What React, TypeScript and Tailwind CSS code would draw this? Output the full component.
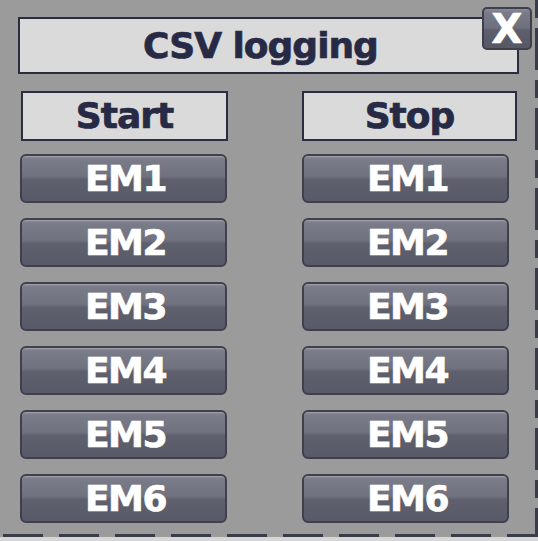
import React from "react";

const font = { fontFamily: '"DejaVu Sans", Verdana, sans-serif' };

function Label({ text, w }: { text: string; w: string }) {
  return (
    <div
      className={`${w} h-[50px] border-2 border-[#2a2d40] bg-[#dadada] flex items-center justify-center text-[36px] font-bold leading-none tracking-[-1px] text-[#272a45] [-webkit-text-stroke:0.7px_#272a45]`}
    >
      {text}
    </div>
  );
}

function EmButton({ text }: { text: string }) {
  return (
    <div className="w-[207px] h-[49px] rounded-[6px] border-2 border-[#3e404e] bg-[linear-gradient(180deg,#8a8b97_0%,#7a7b89_8%,#71727f_45%,#5f606e_52%,#595a68_100%)] shadow-[inset_0_1px_0_rgba(255,255,255,0.18)] flex items-center justify-center text-[36px] font-bold leading-none tracking-[-1.5px] text-white [-webkit-text-stroke:0.7px_#ffffff] pl-[4px]">
      {text}
    </div>
  );
}

export default function App() {
  const rows = ["EM1", "EM2", "EM3", "EM4", "EM5", "EM6"];
  return (
    <div className="w-[538px] h-[541px] bg-[#9b9b9b] overflow-hidden flex flex-col" style={font}>
      <div className="flex h-[534px]">
        <div className="relative w-[535px] h-[534px] flex flex-col">
          <div className="ml-[18px] mt-[17px] w-[501px] h-[57px] border-2 border-[#2a2d40] bg-[#dadada] flex items-center justify-center pr-[16px] text-[36px] font-bold leading-none tracking-[-1px] text-[#272a45] [-webkit-text-stroke:0.7px_#272a45]">
            CSV logging
          </div>
          <div className="absolute left-[482px] top-[7px] w-[50px] h-[43px] rounded-[5px] border-2 border-[#3e404e] bg-[linear-gradient(180deg,#8a8b97_0%,#797a88_10%,#6f707e_48%,#5e5f6d_54%,#575866_100%)] flex items-center justify-center text-[40px] font-bold leading-none text-white [-webkit-text-stroke:0.7px_#ffffff]">
            X
          </div>
          <div className="flex mt-[17px]">
            <div className="ml-[20px] w-[208px] flex flex-col">
              <div className="pl-[1px]">
                <Label text="Start" w="w-[207px]" />
              </div>
              <div className="mt-[13px] flex flex-col gap-[15px]">
                {rows.map((r) => (
                  <EmButton key={r} text={r} />
                ))}
              </div>
            </div>
            <div className="ml-[74px] w-[215px] flex flex-col">
              <Label text="Stop" w="w-[215px]" />
              <div className="mt-[13px] flex flex-col gap-[15px]">
                {rows.map((r) => (
                  <EmButton key={r} text={r} />
                ))}
              </div>
            </div>
          </div>
        </div>
        <div className="w-[3px] h-[534px] bg-[repeating-linear-gradient(180deg,#3a3c48_0_18px,transparent_18px_28px,#3a3c48_28px_70px,transparent_70px_80px)]" />
      </div>
      <div className="h-[3px] w-[538px] bg-[repeating-linear-gradient(90deg,transparent_0_3px,#3a3c48_3px_43px,transparent_43px_56px)]" />
      <div className="h-[4px] w-[538px] bg-[#d6d6d6]" />
    </div>
  );
}
